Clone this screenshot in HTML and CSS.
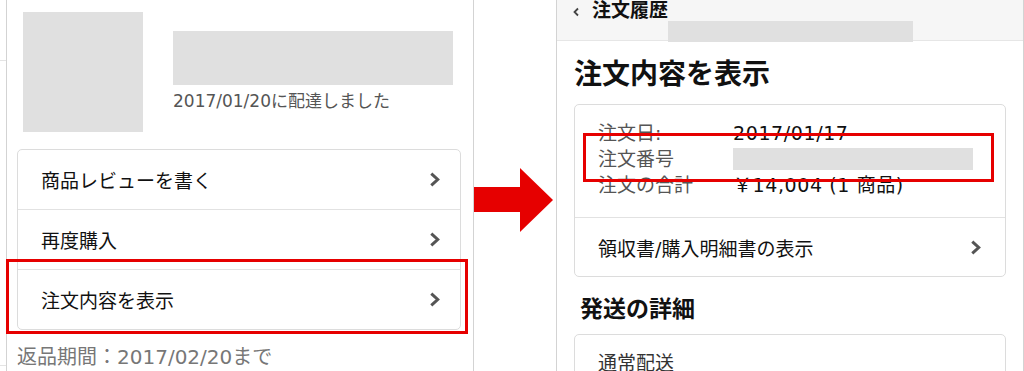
FILE: index.html
```html
<html>
<head>
<meta charset="utf-8">
<meta name="viewport" content="width=device-width, initial-scale=1">
<link rel="stylesheet" href="styles.css">
</head>
<body>
<div class="page">

  <div class="edge">
    <div class="edge_top"></div>
    <div class="edge_bottom"></div>
  </div>

  <!-- before: order history item -->
  <section class="panel before">
    <div class="product">
      <div class="thumb"></div>
      <div class="product_info">
        <div class="title_mask"></div>
        <p class="delivered">2017/01/20に配達しました</p>
      </div>
    </div>
    <ul class="menu">
      <li>商品レビューを書く
        <svg class="chev" viewBox="0 0 10 14"><polyline points="2,1.5 8,7 2,12.5" /></svg>
      </li>
      <li>再度購入
        <svg class="chev" viewBox="0 0 10 14"><polyline points="2,1.5 8,7 2,12.5" /></svg>
      </li>
      <li>注文内容を表示
        <svg class="chev" viewBox="0 0 10 14"><polyline points="2,1.5 8,7 2,12.5" /></svg>
      </li>
    </ul>
    <p class="return">返品期間：2017/02/20まで</p>
    <div class="mark mark_menu"></div>
  </section>

  <div class="gap">
    <svg class="arrow" viewBox="0 0 80 64">
      <polygon points="0,19 46,19 46,0 79,32 46,64 46,44 0,44" />
    </svg>
  </div>

  <!-- after: order detail -->
  <section class="panel after">
    <header class="crumb">
      <svg class="crumb_chev" viewBox="0 0 6 10"><polyline points="5,1.5 1.5,5 5,8.5" /></svg>
      <span>注文履歴</span>
      <div class="crumb_mask"></div>
    </header>

    <h1>注文内容を表示</h1>

    <div class="card">
      <div class="summary">
        <div class="row"><span class="label">注文日:</span><span class="value">2017/01/17</span></div>
        <div class="row"><span class="label">注文番号</span><span class="value"><span class="num_mask"></span></span></div>
        <div class="row"><span class="label">注文の合計</span><span class="value">￥14,004 (1 商品)</span></div>
      </div>
      <div class="card_link">領収書/購入明細書の表示
        <svg class="chev" viewBox="0 0 10 14"><polyline points="2,1.5 8,7 2,12.5" /></svg>
      </div>
      <div class="mark mark_summary"></div>
    </div>

    <h2>発送の詳細</h2>

    <div class="card">
      <div class="ship">通常配送</div>
    </div>
  </section>

</div>
</body>
</html>
```

FILE: styles.css
```css
* {
  box-sizing: border-box;
}

body {
  margin: 0;
  background: #fff;
  font-family: "DejaVu Sans", "Noto Sans CJK JP", sans-serif;
  color: #111;
}

.page {
  display: flex;
  height: 371px;
  overflow: hidden;
}

/* faint page lines left of the first panel */
.edge {
  width: 6px;
  display: flex;
  flex-direction: column;
  justify-content: space-between;
}
.edge_top {
  height: 61px;
  border-bottom: 1px solid #e4e4e4;
}
.edge_bottom {
  height: 6px;
  border-top: 1px solid #e4e4e4;
}

.panel {
  position: relative;
  width: 468px;
  height: 371px;
  border-left: 1px solid #d3d3d3;
  border-right: 1px solid #d3d3d3;
}

/* ---------- before ---------- */
.before {
  padding: 12px 12px 0 10px;
}

.product {
  display: flex;
  gap: 30px;
  padding-left: 6px;
}
.thumb {
  width: 120px;
  height: 120px;
  background: #e0e0e0;
}
.product_info {
  padding-top: 19px;
}
.title_mask {
  width: 280px;
  height: 54px;
  background: #e0e0e0;
}
.delivered {
  margin: 3px 0 0;
  font-size: 17px;
  line-height: 26px;
  color: #555;
}

.menu {
  list-style: none;
  margin: 17px 0 0;
  padding: 0;
  border: 1px solid #dcdcdc;
  border-radius: 5px;
}
.menu li {
  display: flex;
  align-items: center;
  justify-content: space-between;
  height: 59px;
  padding: 0 20px 0 23px;
  font-size: 19px;
}
.menu li + li {
  height: 60px;
  border-top: 1px solid #e2e2e2;
}

.chev {
  width: 11px;
  height: 15px;
}
.chev polyline {
  fill: none;
  stroke: #555;
  stroke-width: 2.8;
}

.return {
  margin: 14px 0 0;
  font-size: 20px;
  line-height: 26px;
  color: #777;
}

.mark {
  position: absolute;
  border: 3px solid #e60000;
}
.mark_menu {
  left: -1px;
  top: 259px;
  width: 462px;
  height: 75px;
}

/* ---------- arrow ---------- */
.gap {
  width: 82px;
  padding-top: 168px;
}
.arrow {
  display: block;
  width: 80px;
  height: 64px;
}
.arrow polygon {
  fill: #e60000;
}

/* ---------- after ---------- */
.after {
  padding: 0 17px;
}

.crumb {
  position: relative;
  display: flex;
  align-items: flex-start;
  height: 41px;
  margin: 0 -17px;
  padding-left: 16px;
  background: #f6f6f6;
  border-bottom: 1px solid #e6e6e6;
}
.crumb_chev {
  width: 6px;
  height: 10px;
  margin: 7px 13px 0 0;
}
.crumb_chev polyline {
  fill: none;
  stroke: #444;
  stroke-width: 1.8;
}
.crumb span {
  font-size: 19px;
  font-weight: bold;
  line-height: 20px;
}
.crumb_mask {
  position: absolute;
  left: 111px;
  top: 21px;
  width: 245px;
  height: 21px;
  background: #e0e0e0;
}

h1 {
  margin: 17px 0 12px;
  font-size: 28px;
  line-height: 34px;
  font-weight: bold;
}

.card {
  position: relative;
  border: 1px solid #dcdcdc;
  border-radius: 5px;
}

.summary {
  padding: 15px 0 19px 23px;
  font-size: 19px;
  line-height: 26px;
}
.row {
  display: flex;
}
.label {
  width: 135px;
  color: #555;
}
.value {
  display: flex;
  align-items: center;
  letter-spacing: 0.6px;
}
.num_mask {
  display: block;
  width: 240px;
  height: 22px;
  background: #e0e0e0;
}

.card_link {
  display: flex;
  align-items: center;
  justify-content: space-between;
  height: 59px;
  padding: 0 24px 0 23px;
  border-top: 1px solid #e2e2e2;
  font-size: 19px;
}

.mark_summary {
  left: 8px;
  top: 28px;
  width: 411px;
  height: 49px;
}

h2 {
  margin: 17px 0 10px 6px;
  font-size: 23px;
  line-height: 30px;
  font-weight: bold;
}

.ship {
  padding: 15px 23px;
  font-size: 19px;
  line-height: 26px;
  color: #333;
}
```
